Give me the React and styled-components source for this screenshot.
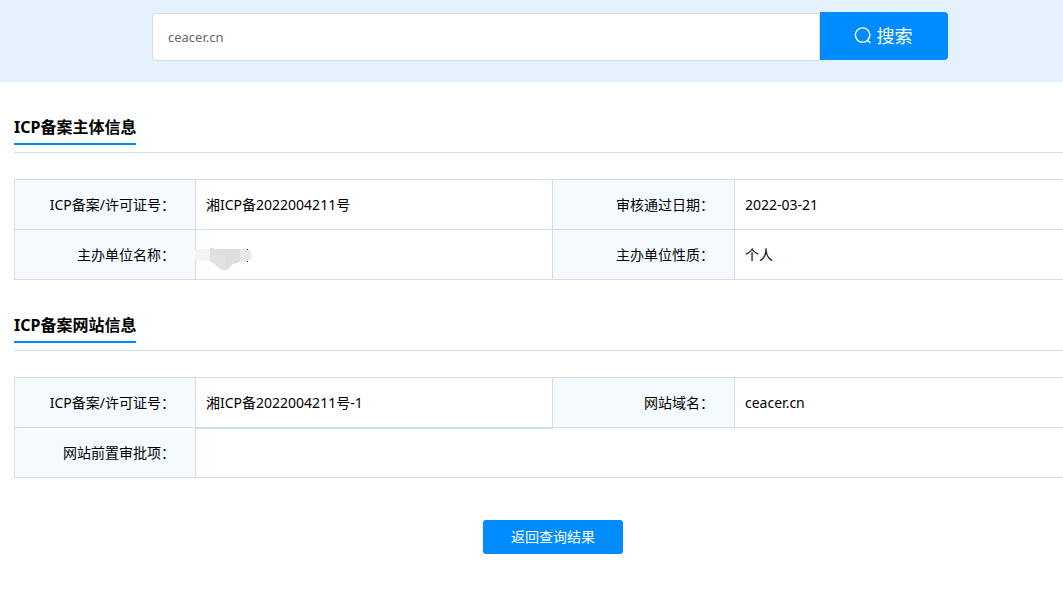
import React from "react";
import styled, { createGlobalStyle } from "styled-components";

const GlobalStyle = createGlobalStyle`
  * { box-sizing: border-box; }
  body {
    margin: 0;
    background: #fff;
    color: #000;
    font: 14px/20px "Noto Sans", "Noto Sans CJK SC", sans-serif;
  }
  input, button { font-family: inherit; }
`;

const Page = styled.div`
  overflow-x: hidden;
  padding-bottom: 40px;
`;

const SearchBar = styled.header`
  padding: 12px 115px 21px 152px;
  background: #e4f2ff;
`;

const SearchForm = styled.form`
  display: flex;
  align-items: flex-start;
`;

const SearchInput = styled.input`
  flex: 1;
  min-width: 0;
  height: 48px;
  margin: 1px 0 0;
  padding: 0 15px;
  border: 1px solid #dcdcdc;
  border-radius: 4px 0 0 4px;
  background: #fff;
  color: #666;
  font-size: 13px;
  outline: none;
`;

const Button = styled.button`
  display: inline-flex;
  align-items: center;
  justify-content: center;
  padding: 0 2px 2px 0;
  border: 0;
  background: #008cff;
  color: #fff;
  cursor: pointer;
`;

const SearchButton = styled(Button)`
  flex: none;
  gap: 5px;
  width: 128px;
  height: 48px;
  border-radius: 0 4px 4px 0;
  font-size: 18px;
`;

const BackButton = styled(Button)`
  width: 140px;
  height: 34px;
  padding: 0 0 2px;
  border-radius: 3px;
  font-size: 14px;
`;

/* The content column runs past the right edge of the window. */
const Content = styled.main`
  margin: 0 -29px 0 14px;
`;

const Section = styled.section`
  padding-top: 30px;
`;

const TitleRow = styled.div`
  display: flex;
  margin-bottom: 26px;
  padding-bottom: 7px;
  border-bottom: 1px solid #c9dfee;
`;

const Title = styled.h2`
  margin: 0;
  border-bottom: 2px solid #008cff;
  font-size: 16px;
  line-height: 31px;
  font-weight: 700;
`;

const Table = styled.table`
  width: 100%;
  table-layout: fixed;
  border-collapse: separate;
  border-spacing: 0;
  border-top: 1px solid #dcdcdc;
`;

const LabelCol = styled.col`
  width: 182px;
`;

const Row = styled.tr`
  height: 50px;
  --line: #c9dfee;
  &:last-child { --line: #dcdcdc; }
`;

const Label = styled.th`
  padding: 0 20px 0 10px;
  border-right: 1px solid #dcdcdc;
  border-bottom: 1px solid var(--line);
  background: #f5faff;
  font-weight: 400;
  text-align: right;
  &:first-child { border-left: 1px solid #dcdcdc; }
`;

const Value = styled.td`
  padding: 0 10px;
  border-right: 1px solid #dcdcdc;
  border-bottom: 1px solid var(--line);
  box-shadow: ${(p) => (p.$heavy ? "0 1px 0 #c9dfee" : "none")};
`;

const Smudge = styled.svg`
  display: block;
  margin: 8px 0 0 -11px;
`;

const Actions = styled.div`
  display: flex;
  justify-content: center;
  padding-top: 42px;
`;

function SearchIcon() {
  return (
    <svg width="18" height="18" viewBox="0 0 18 18" fill="none" stroke="currentColor" strokeWidth="1.4" aria-hidden="true">
      <circle cx="8.6" cy="9.1" r="7.2" />
      <path d="M13.2 13.9 16.4 17" />
    </svg>
  );
}

function HiddenName() {
  return (
    <Smudge width="57" height="22" viewBox="0 4 57 22" aria-hidden="true">
      <path d="M0 6 3 5H15V17H3L0 16Z" fill="#f3f3f2" />
      <path d="M15 4 19 4 20 5H46V17L42 19 38 20 35 23 32 26H27L22 22 15 17Z" fill="#dedddf" />
      <path d="M15 11H30V26H27L22 22 15 17Z" fill="#e2e2e3" />
      <path d="M45 5H53L56 8 57 11 56 15 53 17 48 18H45Z" fill="#e8e9ea" />
      <path d="M52 5h1v1h-1zM52 17h1v1h-1z" fill="#28484c" />
    </Smudge>
  );
}

function InfoSection({ title, children }) {
  return (
    <Section>
      <TitleRow>
        <Title>{title}</Title>
      </TitleRow>
      <Table>
        <colgroup>
          <LabelCol />
          <col />
          <LabelCol />
          <col />
        </colgroup>
        <tbody>{children}</tbody>
      </Table>
    </Section>
  );
}

export default function App() {
  return (
    <>
      <GlobalStyle />
      <Page>
        <SearchBar>
          <SearchForm onSubmit={(e) => e.preventDefault()}>
            <SearchInput type="text" aria-label="搜索" defaultValue="ceacer.cn" />
            <SearchButton type="submit">
              <SearchIcon />
              搜索
            </SearchButton>
          </SearchForm>
        </SearchBar>
        <Content>
          <InfoSection title="ICP备案主体信息">
            <Row>
              <Label scope="row">ICP备案/许可证号：</Label>
              <Value>湘ICP备2022004211号</Value>
              <Label scope="row">审核通过日期：</Label>
              <Value>2022-03-21</Value>
            </Row>
            <Row>
              <Label scope="row">主办单位名称：</Label>
              <Value><HiddenName /></Value>
              <Label scope="row">主办单位性质：</Label>
              <Value>个人</Value>
            </Row>
          </InfoSection>
          <InfoSection title="ICP备案网站信息">
            <Row>
              <Label scope="row">ICP备案/许可证号：</Label>
              <Value $heavy>湘ICP备2022004211号-1</Value>
              <Label scope="row">网站域名：</Label>
              <Value>ceacer.cn</Value>
            </Row>
            <Row>
              <Label scope="row">网站前置审批项：</Label>
              <Value colSpan={3} />
            </Row>
          </InfoSection>
          <Actions>
            <BackButton type="button">返回查询结果</BackButton>
          </Actions>
        </Content>
      </Page>
    </>
  );
}
